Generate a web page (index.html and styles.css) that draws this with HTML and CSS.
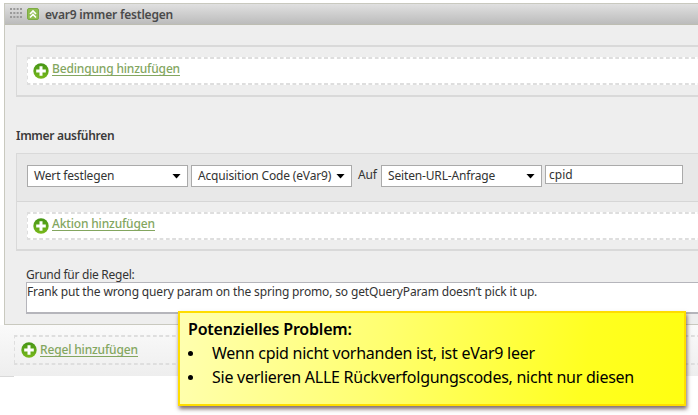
FILE: index.html
```html
<!DOCTYPE html>
<html lang="de">
<head>
<meta charset="utf-8">
<title>evar9 immer festlegen</title>
<link rel="stylesheet" href="styles.css">
</head>
<body>
<svg width="0" height="0" class="defs">
  <defs>
    <linearGradient id="green" x1="0" y1="0" x2="0" y2="1"><stop offset="0" stop-color="#459516"/><stop offset="1" stop-color="#79b91b"/></linearGradient>
    <symbol id="plus" viewBox="0 0 16 16"><circle cx="8" cy="8" r="7.7" fill="url(#green)"/><path d="M8 3.2v9.6M3.2 8h9.6" stroke="#fff" stroke-width="3"/></symbol>
  </defs>
</svg>
<main class="page">
  <section class="panel">
    <header class="panel-head">
      <svg class="grip" width="12" height="12" viewBox="0 0 12 12"><path d="M0 1h12M0 5h12M0 9h12" stroke="#999" stroke-width="2" stroke-dasharray="2 1.33"/></svg>
      <svg class="toggle" width="12" height="12" viewBox="0 0 12 12"><rect x=".5" y=".5" width="11" height="11" rx="1.5" fill="#8fbd50" stroke="#7cab43"/><path d="M3 6l3-3 3 3M3 9.5l3-3 3 3" fill="none" stroke="#fff" stroke-width="1.6"/></svg>
      <h1 class="title">evar9 immer festlegen</h1>
    </header>
    <div class="box condition">
      <div class="drop"><svg class="plus"><use href="#plus"/></svg><a class="link">Bedingung hinzufügen</a></div>
    </div>
    <h2 class="subtitle">Immer ausführen</h2>
    <div class="box action">
      <div class="row">
        <div class="select"><span>Wert festlegen</span><i class="arrow"></i></div>
        <div class="select"><span>Acquisition Code (eVar9)</span><i class="arrow"></i></div>
        <span class="auf">Auf</span>
        <div class="select"><span>Seiten-URL-Anfrage</span><i class="arrow"></i></div>
        <div class="input">cpid</div>
      </div>
      <div class="drop"><svg class="plus"><use href="#plus"/></svg><a class="link">Aktion hinzufügen</a></div>
    </div>
    <div class="label">Grund für die Regel:</div>
    <div class="reason">Frank put the wrong query param on the spring promo, so getQueryParam doesn’t pick it up.</div>
  </section>
  <footer class="foot">
    <div class="drop"><svg class="plus"><use href="#plus"/></svg><a class="link">Regel hinzufügen</a></div>
  </footer>
  <div class="foot-edge"></div>
  <aside class="note">
    <h3>Potenzielles Problem:</h3>
    <ul>
      <li>Wenn cpid nicht vorhanden ist, ist eVar9 leer</li>
      <li>Sie verlieren ALLE Rückverfolgungscodes, nicht nur diesen</li>
    </ul>
  </aside>
</main>
</body>
</html>
```
FILE: styles.css
```css
* { box-sizing: border-box; }
body { margin: 0; background: #fff; font: 12px/16px "Noto Sans", "Open Sans", sans-serif; letter-spacing: -0.16px; color: #333; }
h1, h2, h3, ul { margin: 0; padding: 0; }
.defs { position: absolute; }
.page { position: relative; width: 698px; height: 415px; overflow: hidden; padding-top: 3px; }
.panel { height: 322px; margin-left: 4px; background: #eee; border: solid #c9c9bf; border-width: 1px 0 1px 1px; }
.panel-head { height: 21px; display: flex; align-items: center; padding-left: 5px; background: linear-gradient(#e0e0e0, #bcbcbc); border-bottom: 1px solid #bdbdb2; }
.toggle { margin-left: 5px; }
.title { margin-left: 6px; padding-top: 1px; font-size: 12px; line-height: 16px; font-weight: 600; letter-spacing: -0.2px; color: #4a4a4a; white-space: nowrap; }
.box { margin-left: 11px; border: solid #d9d9d9; border-width: 2px 0 2px 1px; }
.condition { margin-top: 20px; height: 52px; padding: 10px 0 0 10px; }
.drop {
  --fill: #fff;
  height: 28px;
  display: flex;
  align-items: flex-start;
  padding: 6px 0 0 6px;
  background:
    repeating-linear-gradient(90deg, #dedede 0 3px, transparent 3.8px 5.6px, #dedede 6.33px) top / 100% 2px no-repeat,
    repeating-linear-gradient(90deg, #dedede 0 3px, transparent 3.8px 5.6px, #dedede 6.33px) bottom / 100% 2px no-repeat,
    repeating-linear-gradient(#dedede 0 3px, transparent 3.8px 5.6px, #dedede 6.33px) left / 1px 100% no-repeat,
    var(--fill);
}
.plus { width: 16px; height: 16px; flex: none; }
.link { margin: -2px 0 0 3px; height: 15px; line-height: 16px; color: #83a65f; border-bottom: 1px solid #83a65f; white-space: nowrap; font-weight: 500; }
.subtitle { margin: 30px 0 0 11px; font-size: 12px; line-height: 18px; height: 16px; font-weight: 600; letter-spacing: -0.3px; color: #3a3a3a; }
.action { margin-top: 10px; height: 98px; border-top-width: 1px; }
.row { height: 48px; display: flex; align-items: flex-start; padding: 11px 0 0 10px; background: #e8e8e8; border-bottom: 1px solid #d6d6d6; white-space: nowrap; }
.action .drop { margin: 10px 0 0 10px; }
.select { width: 161px; height: 22px; margin-right: 3px; display: flex; align-items: center; justify-content: space-between; padding: 0 6px 0 6px; background: #fff; border: 1px solid #aaa; }
.arrow { width: 9px; height: 5px; background: #000; clip-path: polygon(0 0, 100% 0, 50% 100%); }
.auf { width: 26px; padding: 2px 0 0 3px; }
.input { width: 138px; height: 19px; padding: 1px 0 0 3px; border: 1px solid #aaa; background: #fff; letter-spacing: 0; }
.label { margin: 16px 0 0 21px; height: 15px; line-height: 15px; letter-spacing: -0.26px; }
.reason { margin-left: 21px; height: 32px; padding: 1px 0 0; line-height: 15px; background: #fff; border: solid #b5b5bb; border-width: 1px 0 2px 1px; white-space: nowrap; letter-spacing: -0.15px; }
.foot { height: 51px; padding: 10px 0 0 14px; background: linear-gradient(#fafafa, #eee); }
.foot .drop { --fill: transparent; height: 30px; padding: 7px 0 0 7px; }
.foot .link { margin: 0 0 0 3px; }
.foot-edge { width: 14px; height: 1px; background: #d9d9d9; }
.note { position: absolute; left: 178px; top: 311px; width: 508px; height: 95px; padding: 5px 0 0 8px; border: 2px solid #fd0; background: linear-gradient(100deg, #ffffb0, #ffff70 40%, #ffff20 80%, #ff1); box-shadow: 1px 3px 4px rgba(60, 30, 30, .65); color: #000; font-size: 16px; line-height: 24px; letter-spacing: -0.26px; white-space: nowrap; }
.note h3 { font-size: 16px; font-weight: 600; line-height: 23px; letter-spacing: -0.2px; }
.note ul { list-style: none; }
.note li { display: flex; align-items: center; }
.note li::before { content: ""; width: 5px; height: 5px; margin-right: 19px; border-radius: 50%; background: #000; }
```
